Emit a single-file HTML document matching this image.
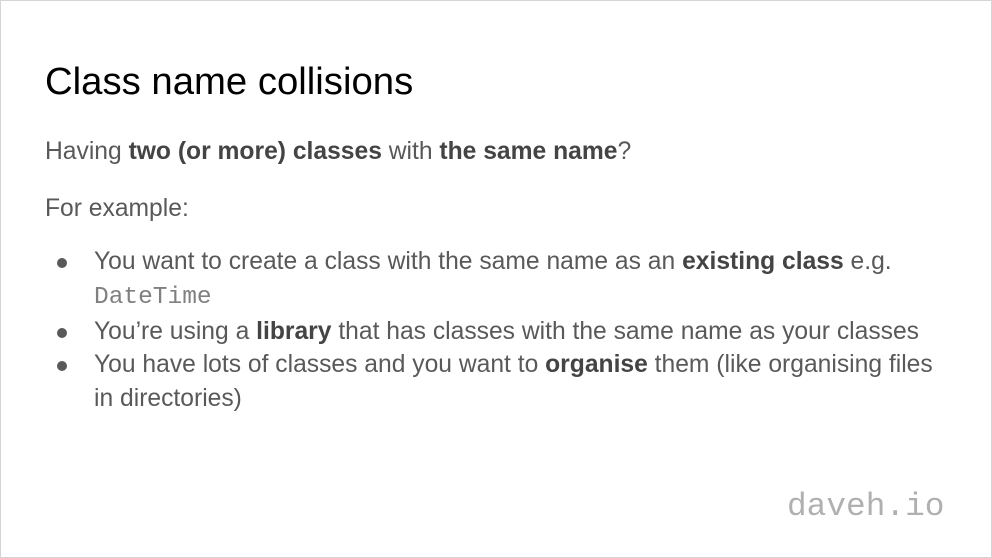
<!DOCTYPE html>
<html><head><style>
html,body{margin:0;padding:0;}
body{width:992px;height:558px;position:relative;background:#fff;overflow:hidden;font-family:"Liberation Sans",Arial,sans-serif;}
.frame{position:absolute;left:0;top:0;width:990px;height:556px;border:1px solid #d4d4d4;}
h1{position:absolute;left:45px;top:58px;margin:0;font-weight:normal;font-size:38.3px;color:#000;line-height:48px;}
.t{position:absolute;left:45px;margin:0;font-size:24.65px;color:#595959;line-height:30px;white-space:nowrap;}
b{color:#444;}
ul{position:absolute;left:45px;top:245px;margin:0;padding:0;list-style:none;font-size:24.65px;color:#595959;line-height:33.8px;white-space:nowrap;}
li{position:relative;padding-left:49px;}
li::before{content:"";position:absolute;left:12px;top:13px;width:10px;height:10px;border-radius:50%;background:#595959;}
.m{font-family:"Liberation Mono",monospace;font-size:24.5px;color:#808080;}
.logo{position:absolute;left:787px;top:487px;font-family:"Liberation Mono",monospace;font-size:32.8px;color:#b0b0b0;line-height:40px;}
</style></head><body>
<div class="frame"></div>
<h1>Class name collisions</h1>
<p class="t" style="top:137px">Having <b>two (or more) classes</b> with <b>the same name</b>?</p>
<p class="t" style="top:194px">For example:</p>
<ul>
<li>You want to create a class with the same name as an <b>existing class</b> e.g.<br><span class="m">DateTime</span></li>
<li>You’re using a <b>library</b> that has classes with the same name as your classes</li>
<li>You have lots of classes and you want to <b>organise</b> them (like organising files<br>in directories)</li>
</ul>
<div class="logo">daveh.io</div>
</body></html>
